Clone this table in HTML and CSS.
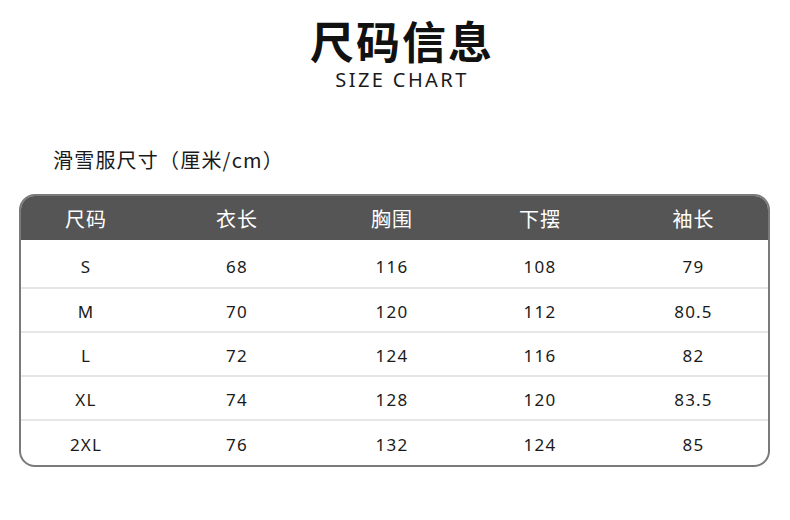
FILE: index.html
```html
<!DOCTYPE html>
<html lang="zh">
<head>
<meta charset="utf-8">
<link rel="stylesheet" href="styles.css">
</head>
<body>
<div class="page">
  <header class="head">
    <h1 class="title">尺码信息</h1>
    <div class="subtitle">SIZE CHART</div>
  </header>
  <div class="caption">滑雪服尺寸（厘米/cm）</div>
  <div class="table">
    <div class="row thead">
      <div>尺码</div><div>衣长</div><div>胸围</div><div>下摆</div><div>袖长</div>
    </div>
    <div class="row first"><div>S</div><div>68</div><div>116</div><div>108</div><div>79</div></div>
    <div class="row"><div>M</div><div>70</div><div>120</div><div>112</div><div>80.5</div></div>
    <div class="row"><div>L</div><div>72</div><div>124</div><div>116</div><div>82</div></div>
    <div class="row"><div>XL</div><div>74</div><div>128</div><div>120</div><div>83.5</div></div>
    <div class="row last"><div>2XL</div><div>76</div><div>132</div><div>124</div><div>85</div></div>
  </div>
</div>
</body>
</html>
```
FILE: styles.css
```css
* { box-sizing: border-box; }
html, body { margin: 0; padding: 0; background: #fff; }
body {
  width: 790px;
  height: 520px;
  overflow: hidden;
  font-family: "Noto Sans", "Noto Sans CJK SC", sans-serif;
  color: #1a1a1a;
}
.page { padding: 13px 19px 0 19px; }
.head { display: flex; flex-direction: column; align-items: center; padding-left: 14px; }
.title {
  margin: 0;
  font-family: "Noto Sans CJK SC", sans-serif;
  font-weight: 700;
  font-size: 44px;
  line-height: 54px;
  letter-spacing: 2px;
  color: #111;
}
.subtitle {
  font-size: 20px;
  line-height: 24px;
  letter-spacing: 2.4px;
  color: #1a1a1a;
  margin-top: 1px;
}
.caption {
  margin: 54px 0 0 34px;
  font-family: "Noto Sans CJK SC", sans-serif;
  font-size: 20px;
  line-height: 28px;
  letter-spacing: 1.2px;
  color: #1a1a1a;
}
.table {
  margin-top: 20px;
  width: 751px;
  border: 2px solid #7a7a7a;
  border-radius: 16px;
  overflow: hidden;
}
.row {
  display: grid;
  grid-template-columns: 130px 172px 138px 158px 1fr;
  height: 44px;
  align-items: center;
  padding-top: 3px;
  border-bottom: 2px solid #e6e6e6;
  font-size: 17px;
  letter-spacing: 1.2px;
}
.row > div { text-align: center; }
.row.first { height: 49px; padding-top: 5px; }
.row.last { border-bottom: none; height: 44px; }
.thead {
  background: #555;
  color: #fff;
  height: 44px;
  padding-top: 0;
  border-bottom: none;
  font-family: "Noto Sans CJK SC", sans-serif;
  font-size: 20px;
  letter-spacing: 1px;
}
```
